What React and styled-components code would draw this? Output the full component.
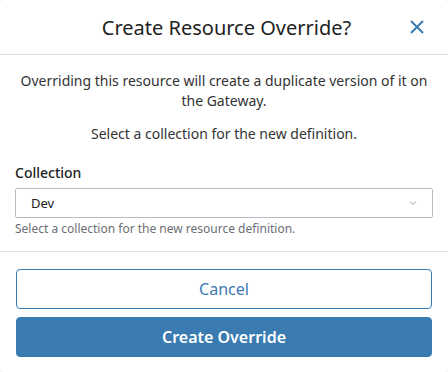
import React from "react";
import styled, { createGlobalStyle } from "styled-components";

const Global = createGlobalStyle`
  html, body { margin: 0; padding: 0; background: #f2f3f5; }
  body { font-family: "Noto Sans", "Open Sans", sans-serif; }
  * { box-sizing: border-box; }
`;

const Dialog = styled.div`
  width: 448px;
  height: 372px;
  background: #fff;
  border-radius: 4px;
  display: flex;
  flex-direction: column;
  overflow: hidden;
`;

const Header = styled.div`
  height: 55px;
  border-bottom: 1px solid #dcdde3;
  display: grid;
  grid-template-columns: 48px 1fr 48px;
  align-items: center;
  padding: 0 8px;
`;

const Title = styled.h2`
  margin: 0;
  grid-column: 2;
  text-align: center;
  font-size: 20px;
  font-weight: 400;
  color: #222;
  line-height: 28px;
  padding-top: 1px;
  padding-left: 5px;
`;

const Close = styled.button`
  grid-column: 3;
  justify-self: end;
  margin-right: 11px;
  width: 24px;
  height: 24px;
  border: 0;
  background: none;
  padding: 0;
  display: flex;
  align-items: center;
  justify-content: center;
  cursor: pointer;
`;

const Body = styled.div`
  padding: 16px 15px 14px;
  border-bottom: 1px solid #e3e4e8;
`;

const Para = styled.p`
  margin: 0 0 ${(p) => (p.$last ? 0 : 13)}px;
  text-align: center;
  font-size: 14px;
  line-height: 20px;
  color: #333;
`;

const Label = styled.label`
  display: block;
  margin-top: 19px;
  font-size: 14px;
  line-height: 20px;
  font-weight: 500;
  color: #222;
`;

const Select = styled.div`
  margin-top: 5px;
  height: 30px;
  border: 1px solid #b9bcc4;
  border-radius: 2px;
  display: flex;
  align-items: center;
  justify-content: space-between;
  padding: 0 15px 0 0;
  font-size: 13px;
  color: #222;
`;

const Value = styled.span`
  display: block;
  margin-left: 15px;
`;

const Help = styled.div`
  margin-top: 2px;
  font-size: 12px;
  line-height: 17px;
  color: #6b6e75;
`;

const Footer = styled.div`
  padding: 17px 16px 0;
  display: flex;
  flex-direction: column;
  gap: 8px;
`;

const Button = styled.button`
  height: 40px;
  width: 100%;
  border-radius: 4px;
  border: 1px solid #3a7bb2;
  background: ${(p) => (p.$primary ? "#3a7bb2" : "#fff")};
  color: ${(p) => (p.$primary ? "#fff" : "#3a7bb2")};
  font-family: inherit;
  font-size: 16px;
  font-weight: ${(p) => (p.$primary ? 600 : 400)};
  cursor: pointer;
`;

export default function App() {
  return (
    <>
      <Global />
      <Dialog>
        <Header>
          <Title>Create Resource Override?</Title>
          <Close aria-label="Close">
            <svg width="14" height="14" viewBox="0 0 14 14">
              <path d="M1 1 L13 13 M13 1 L1 13" stroke="#3a7bb2" strokeWidth="2" fill="none" />
            </svg>
          </Close>
        </Header>
        <Body>
          <Para>Overriding this resource will create a duplicate version of it on the Gateway.</Para>
          <Para $last>Select a collection for the new definition.</Para>
          <Label>Collection</Label>
          <Select>
            <Value>Dev</Value>
            <svg width="8" height="6" viewBox="0 0 8 6">
              <path d="M1 1.5 L4 4.5 L7 1.5" stroke="#999" strokeWidth="1" fill="none" />
            </svg>
          </Select>
          <Help>Select a collection for the new resource definition.</Help>
        </Body>
        <Footer>
          <Button>Cancel</Button>
          <Button $primary>Create Override</Button>
        </Footer>
      </Dialog>
    </>
  );
}
